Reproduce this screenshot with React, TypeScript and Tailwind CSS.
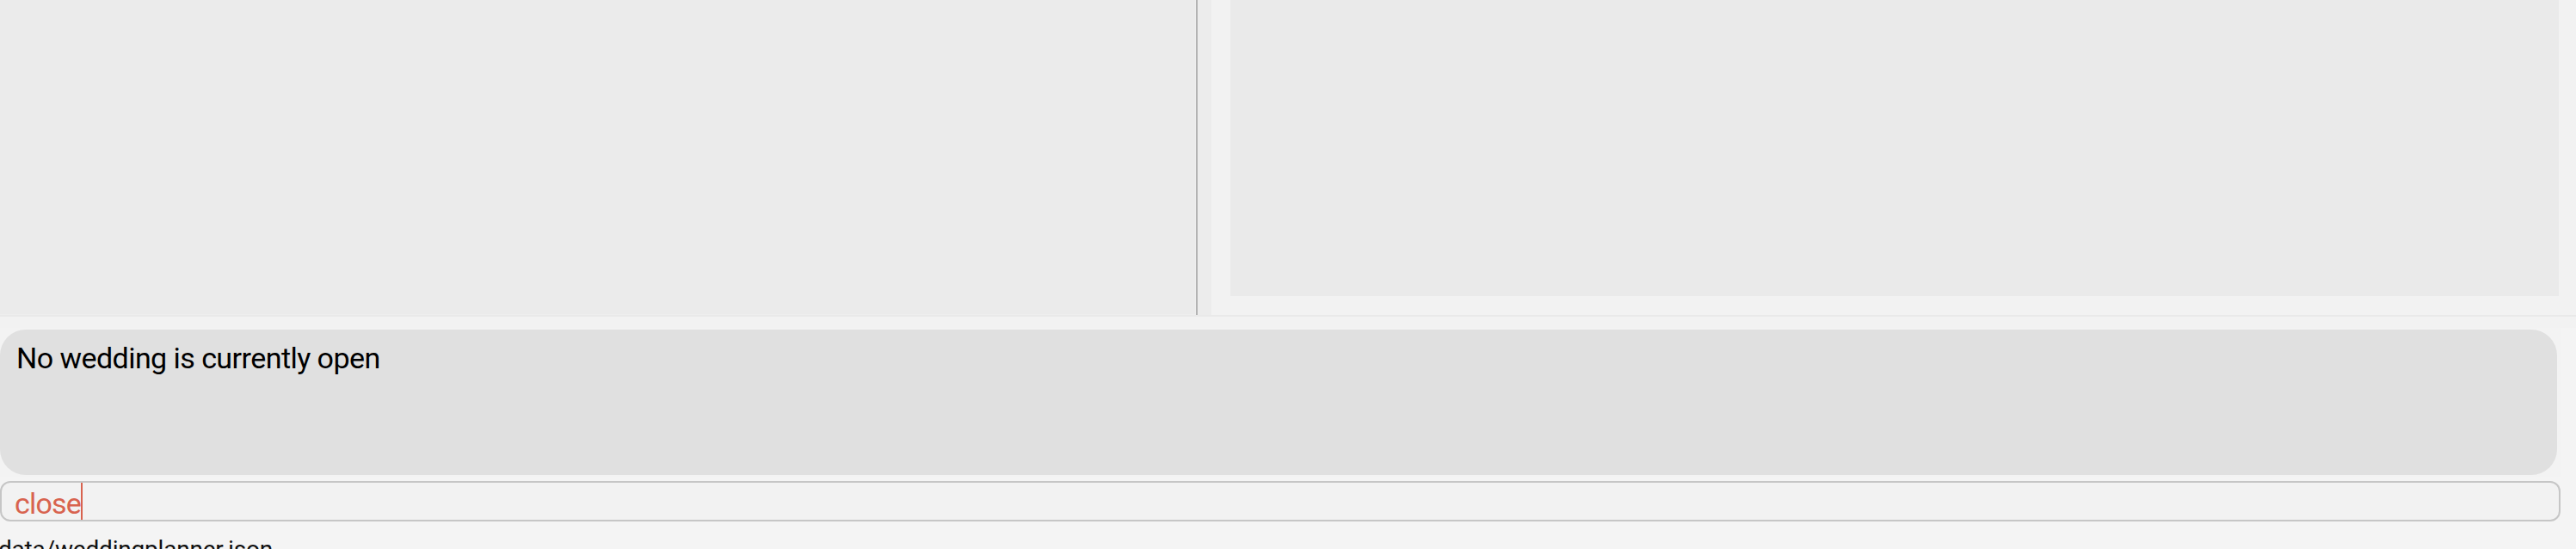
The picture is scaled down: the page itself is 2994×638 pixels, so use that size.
export default function App() {
  return (
    <div className="flex h-[638px] w-[2994px] flex-col overflow-hidden bg-[#f4f4f4] font-['Roboto',sans-serif]">
      {/* top split view */}
      <div className="flex h-[366px] shrink-0">
        <div className="w-[1390px] border-r border-b border-[#eeeeee] bg-[#ebebeb]" />
        <div className="w-[2px] bg-[#b3b3b3]" />
        <div className="w-[16px] bg-[#ececec]" />
        <div className="flex flex-1 bg-[#f2f2f2] pb-[22px] pl-[22px] pr-[20px]">
          <div className="flex-1 bg-[#eaeaea]" />
        </div>
      </div>
      <div className="h-[2px] shrink-0 bg-[#e9e9e9]" />
      <div className="h-[13px] shrink-0 bg-[#f2f2f2]" />

      {/* status box */}
      <div className="w-[2976px] shrink-0 bg-[#f3f3f3] py-[2px] pr-[4px]">
        <div className="h-[169px] rounded-[30px] bg-[#e0e0e0] pl-[19px] pt-[16px]">
          <p className="text-[34px] leading-[34px] tracking-[-0.55px] text-black">No wedding is currently open</p>
        </div>
      </div>

      {/* command input */}
      <div className="mt-[5px] flex h-[47px] w-[2976px] shrink-0 rounded-[12px] border-2 border-[#c6c6c6] bg-[#f2f2f2] pl-[15px]">
        <span className="pt-[7px] text-[34px] leading-[34px] tracking-[-0.8px] text-[#d8634f]">close</span>
        <span className="w-[2px] self-stretch bg-[#d8634f]" />
      </div>

      <p className="-ml-[2px] mt-[19px] text-[28px] leading-[28px] tracking-[-0.2px] text-[#111]">data/weddingplanner.json</p>
    </div>
  )
}
